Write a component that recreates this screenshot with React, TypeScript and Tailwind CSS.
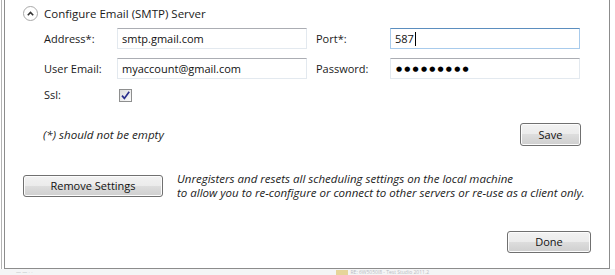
import type { ReactNode } from "react";

const font = { fontFamily: '"Segoe UI", "Open Sans", "Liberation Sans", sans-serif' };

function WinButton({ children, className }: { children: ReactNode; className: string }) {
  return (
    <button
      type="button"
      className={`flex items-center justify-center rounded-[3px] border border-[#707070] bg-[linear-gradient(#f2f2f2_0%,#ebebeb_50%,#dddddd_50%,#cfcfcf_100%)] text-[11px] text-[#111] shadow-[inset_0_0_0_1px_#fcfcfc] ${className}`}
    >
      {children}
    </button>
  );
}

function TextBox({ children, focused = false }: { children: ReactNode; focused?: boolean }) {
  return (
    <div
      className={`flex h-[21px] items-center border px-[4px] text-[11px] text-[#111] ${
        focused
          ? "border-[#a8cbec] border-t-[#5b8ebf]"
          : "border-[#e3e9ef] border-t-[#abadb3]"
      }`}
    >
      {children}
    </div>
  );
}

function Label({ children, className = "" }: { children: ReactNode; className?: string }) {
  return <div className={`flex items-center text-[11px] text-[#1a1a1a] ${className}`}>{children}</div>;
}

export default function App() {
  return (
    <div className="flex h-[275px] w-[615px] flex-col overflow-hidden bg-white" style={font}>
      <div className="ml-px flex h-[269px] w-[609px] border-l border-[#b4b4b4] pl-[2px]">
        <div className="flex flex-1 flex-col border-x border-b border-[#8c8c8c]">
          {/* header */}
          <div className="flex items-center gap-[6px] pl-[18px] pt-[5px]">
            <div className="flex h-[15px] w-[15px] items-center justify-center rounded-full border border-[#a9a9a9] bg-white">
              <svg width="7" height="5" viewBox="0 0 7 5">
                <path d="M0.8 4.2 L3.5 1.4 L6.2 4.2" fill="none" stroke="#333" strokeWidth="1.6" />
              </svg>
            </div>
            <span className="text-[11.5px] text-[#1a1a1a]">Configure Email (SMTP) Server</span>
          </div>

          {/* form */}
          <div className="mt-[6px] grid grid-cols-[73px_190px_83px_190px] gap-y-[9px] pl-[39px]">
            <Label>Address*:</Label>
            <TextBox>smtp.gmail.com</TextBox>
            <Label className="pl-[9px]">Port*:</Label>
            <TextBox focused>
              587
              <span className="ml-px inline-block h-[14px] w-px bg-black" />
            </TextBox>

            <Label>User Email:</Label>
            <TextBox>myaccount@gmail.com</TextBox>
            <Label className="pl-[9px]">Password:</Label>
            <TextBox>
              <span
                className="pl-px text-[7px] tracking-[2.2px] text-black"
                style={{ fontFamily: '"DejaVu Sans", sans-serif' }}
              >
                ●●●●●●●●●
              </span>
            </TextBox>

            <Label className="h-[14px]">Ssl:</Label>
            <div className="flex items-center pl-[2px]">
              <div className="flex h-[13px] w-[13px] items-center justify-center border border-[#8e8f8f] bg-[linear-gradient(135deg,#dcdcdc,#fbfbfb)]">
                <svg width="9" height="9" viewBox="0 0 9 9">
                  <path d="M1 4.6 L3.4 7.4 L8.2 0.8" fill="none" stroke="#2a2f8c" strokeWidth="1.7" />
                </svg>
              </div>
            </div>
          </div>

          {/* required note + save */}
          <div className="mt-[21px] flex w-[576px] items-center justify-between pl-[38px]">
            <span className="text-[11.6px] italic text-[#222]">(*) should not be empty</span>
            <WinButton className="h-[23px] w-[61px]">Save</WinButton>
          </div>

          {/* remove settings */}
          <div className="mt-[26px] flex items-center gap-[14px] pl-[18px]">
            <WinButton className="h-[22px] w-[140px]">Remove Settings</WinButton>
            <div className="text-[11.5px] italic leading-[14px] text-[#222]">
              <div>Unregisters and resets all scheduling settings on the local machine</div>
              <div>to allow you to re-configure or connect to other servers or re-use as a client only.</div>
            </div>
          </div>

          {/* done */}
          <div className="mt-[31px] flex w-[586px] justify-end">
            <WinButton className="h-[22px] w-[84px]">Done</WinButton>
          </div>
        </div>
      </div>

      {/* taskbar strip peeking below the window */}
      <div className="flex flex-1 items-center gap-[3px] overflow-hidden bg-[#f4f5f6] pl-[16px] text-[5px] leading-[5px] text-[#b8bcc2]">
        <span>— — · ·</span>
        <span className="ml-[300px] h-[5px] w-[12px] bg-[#e6d59a]" />
        <span>RE: 6W5050l8 - Test Studio 2011.2</span>
      </div>
    </div>
  );
}
